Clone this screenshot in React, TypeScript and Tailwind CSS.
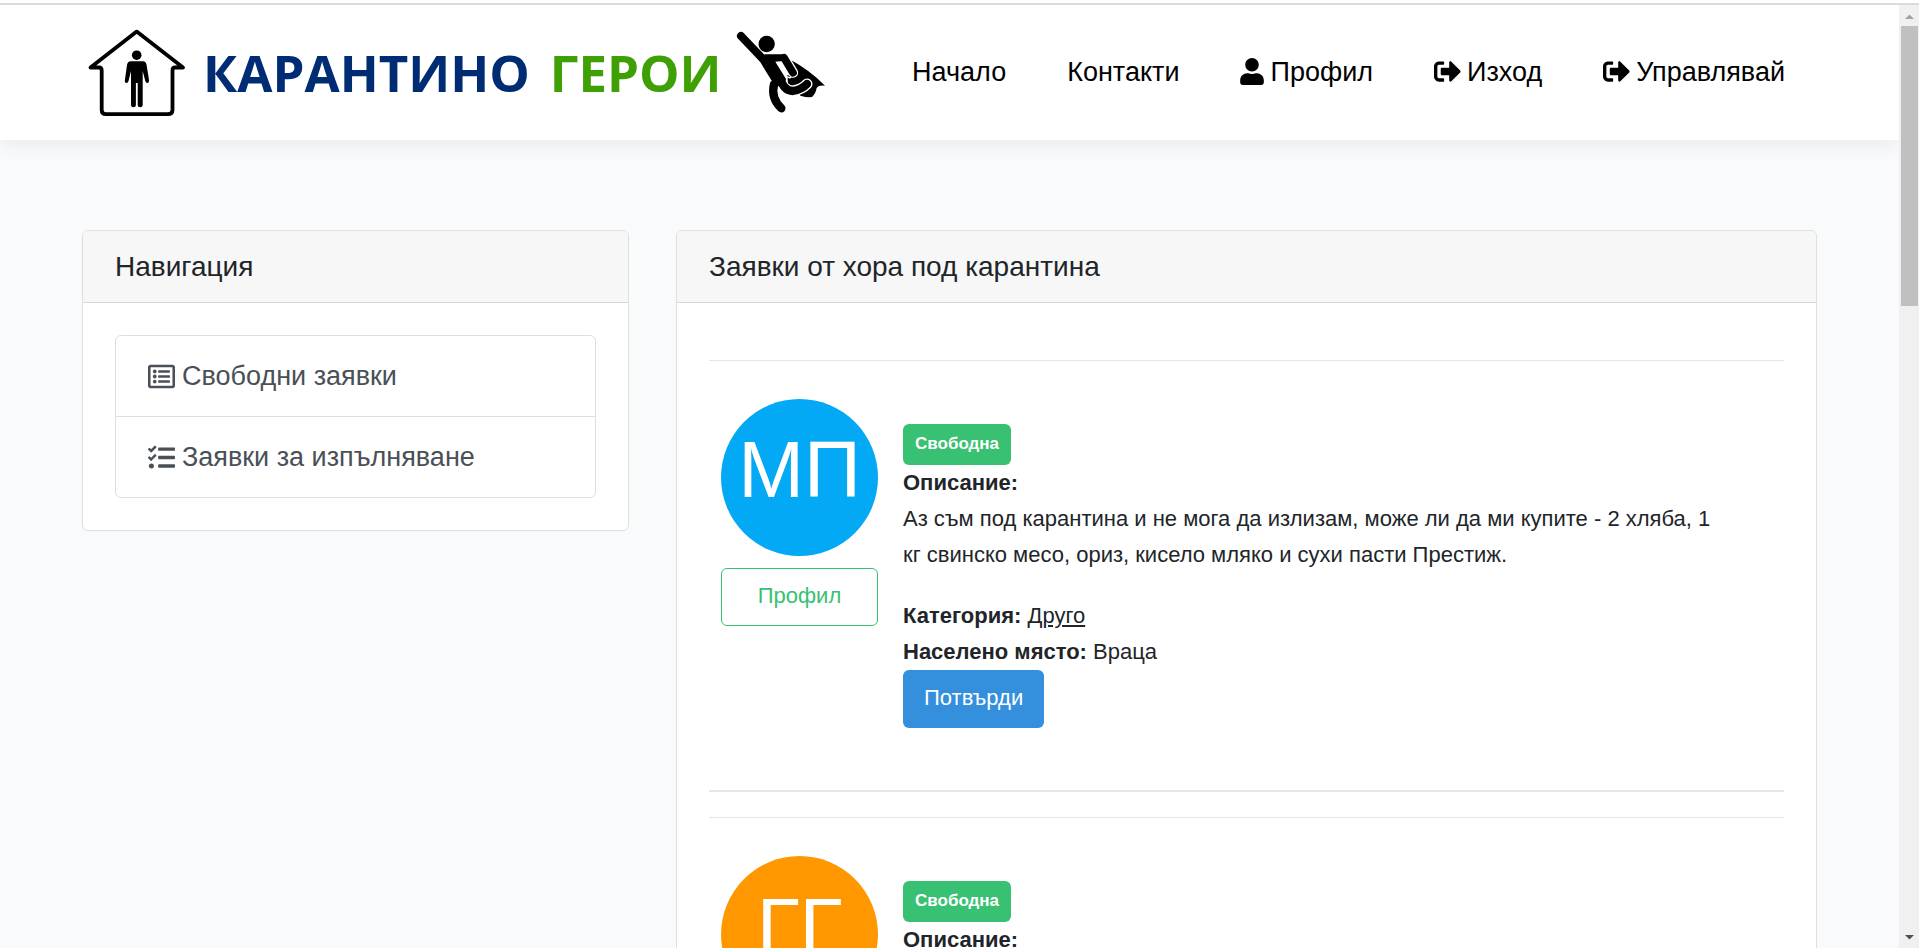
import React from "react";
import { FaUser, FaSignOutAlt, FaRegListAlt, FaTasks } from "react-icons/fa";

type HelpRequest = {
  id: number;
  initials: string;
  avatarClass: string;
  description: string;
  category: string;
  town: string;
};

const requests: HelpRequest[] = [
  {
    id: 1,
    initials: "МП",
    avatarClass: "bg-[#03a9f4]",
    description:
      "Аз съм под карантина и не мога да излизам, може ли да ми купите - 2 хляба, 1 кг свинско месо, ориз, кисело мляко и сухи пасти Престиж.",
    category: "Друго",
    town: "Враца",
  },
  {
    id: 2,
    initials: "ГГ",
    avatarClass: "bg-[#ff9800]",
    description: "",
    category: "Друго",
    town: "Враца",
  },
];

function HouseIcon() {
  return (
    <svg viewBox="0 0 100 90" className="h-[90px] w-[100px] shrink-0" aria-hidden="true">
      <path
        d="M49.7 3.6L3.5 39.5H12Q14.700 39.500 14.700 42.500V82Q14.700 86.200 19 86.200H81Q85.500 86.200 85.500 82V42.500Q85.500 39.500 88 39.500H96Z"
        fill="none"
        stroke="#000"
        strokeWidth="3.800"
        strokeLinejoin="round"
      />
      <circle cx="49.700" cy="27.200" r="4.800" />
      <path d="M43.500 33.200H56Q59 33.200 59.600 37L62 52Q62.200 55 60.300 55Q58.800 55 58.300 53L55.700 43V77Q55.700 79.200 53.200 79.200Q50.700 79.200 50.700 77V55H48.900V77Q48.900 79.200 46.400 79.200Q44 79.200 44 77V43L41.500 53Q41 55 39.500 55Q37.500 55 37.900 52L40 37Q40.600 33.200 43.500 33.200Z" />
    </svg>
  );
}

function HeroIcon() {
  return (
    <svg
      viewBox="0 0 300 285"
      className="h-[95px] w-[100px] shrink-0"
      fill="none"
      strokeLinecap="round"
      strokeLinejoin="round"
      aria-hidden="true"
    >
      <path
        d="M184 106Q238 135 285 182Q266 180 260 189Q257 206 246 216Q232 218 211 212L200 190L174 176L172 150L195 155Z"
        fill="#000"
      />
      <path d="M162 98L189 143" stroke="#fff" strokeWidth="31" />
      <path d="M152 165Q162 198 188 198Q215 194 231 177" stroke="#fff" strokeWidth="33" />
      <path d="M162 98L189 143" stroke="#000" strokeWidth="23" />
      <path d="M150 160Q162 198 188 198Q215 194 231 177" stroke="#000" strokeWidth="25" />
      <path d="M132 178Q122 220 154 250" stroke="#000" strokeWidth="25" />
      <path d="M33 33L98 101" stroke="#000" strokeWidth="24" />
      <path
        d="M84 100L105 88L158 88Q166 90 170 96L160 108L136 110L168 162L162 190L146 184L124 166Z"
        fill="#000"
      />
      <path d="M142 112L167 152Q172 159 182 158" stroke="#fff" strokeWidth="4" />
      <circle cx="110" cy="57" r="24.500" fill="#000" />
    </svg>
  );
}

function Logo() {
  return (
    <a href="#" className="flex items-center" aria-label="Карантино герои">
      <HouseIcon />
      <span className="ml-4 flex gap-5 font-['Open_Sans',sans-serif] text-[51px] leading-none font-bold">
        <span className="text-[#002c73]">КАРАНТИНО</span>
        <span className="text-[#3fa006]">ГЕРОИ</span>
      </span>
      <span className="ml-2">
        <HeroIcon />
      </span>
    </a>
  );
}

function Card({ title, children }: { title: string; children: React.ReactNode }) {
  return (
    <section className="overflow-hidden rounded-md border border-[#dfdfdf] bg-white">
      <h2 className="border-b border-[#d8d8d8] bg-[#f7f7f7] px-8 py-4 text-[28px] leading-[39px]">
        {title}
      </h2>
      <div className="p-8">{children}</div>
    </section>
  );
}

function RequestItem({ request }: { request: HelpRequest }) {
  return (
    <article className="border-b-2 border-[#e6e6e6] pb-[62px]">
      <div className="flex gap-[25px] border-t border-[#e5e5e5] px-3 pt-[38px]">
        <div className="flex w-[157px] shrink-0 flex-col gap-3">
          <div
            className={
              "flex h-[157px] items-center justify-center rounded-full pb-4 text-[79px] leading-none text-white " +
              request.avatarClass
            }
          >
            {request.initials}
          </div>
          <button
            type="button"
            className="h-[58px] rounded-md border border-[#38c172] pb-0.5 text-[#38c172]"
          >
            Профил
          </button>
        </div>
        <div className="pt-[25px] pr-10">
          <span className="flex h-[41px] w-fit items-center rounded-md bg-[#38c172] px-3 pb-0.5 text-[17px] font-bold text-white">
            Свободна
          </span>
          <h3 className="font-bold">Описание:</h3>
          <p className="mb-[25px]">{request.description}</p>
          <p>
            <b>Категория:</b> <u className="underline-offset-2">{request.category}</u>
          </p>
          <p>
            <b>Населено място:</b> {request.town}
          </p>
          <button
            type="button"
            className="h-[58px] rounded-md bg-[#3490dc] px-[21px] pb-0.5 text-white"
          >
            Потвърди
          </button>
        </div>
      </div>
    </article>
  );
}

function ScrollBar() {
  return (
    <div className="flex w-5 shrink-0 flex-col items-center bg-[#f0f0f0]" aria-hidden="true">
      <svg viewBox="0 0 20 21" className="h-[21px] w-5 shrink-0">
        <path d="M6 14L10.500 9.500L15 14Z" fill="#a3a3a3" />
      </svg>
      <div className="h-[280px] w-[17px] bg-[#c0c0c0]" />
      <svg viewBox="0 0 20 21" className="mt-auto h-[21px] w-5 shrink-0">
        <path d="M6 8L10.500 12.500L15 8Z" fill="#505050" />
      </svg>
    </div>
  );
}

export default function App() {
  return (
    <div className="flex h-screen flex-col overflow-hidden bg-[#f8fafc] font-['Liberation_Sans',Arial,sans-serif] text-[22px] leading-9 text-[#212529]">
      <div className="shrink-0 border-b-2 border-[#dadae0] bg-white pt-[3px]" />
      <div className="flex min-h-0 flex-1">
        <div className="min-w-0 flex-1 overflow-hidden">
          <header className="flex h-[135px] items-center justify-between bg-white pr-[114px] pl-[87px] shadow-[0_3px_20px_rgba(0,0,0,0.08)]">
            <Logo />
            <nav className="flex gap-[61px] pb-0.5 text-[27px] text-black">
              <a href="#">Начало</a>
              <a href="#">Контакти</a>
              <a href="#" className="flex items-center gap-1.5">
                <FaUser className="w-6" />
                Профил
              </a>
              <a href="#" className="flex items-center gap-1.5">
                <FaSignOutAlt />
                Изход
              </a>
              <a href="#" className="flex items-center gap-1.5">
                <FaSignOutAlt />
                Управлявай
              </a>
            </nav>
          </header>
          <main className="flex items-start gap-[47px] px-[82px] pt-[90px]">
            <aside className="w-[547px] shrink-0">
              <Card title="Навигация">
                <ul className="divide-y divide-[#dfdfdf] rounded-md border border-[#dfdfdf] text-[27px] leading-10 text-[#495057]">
                  <li>
                    <a href="#" className="flex items-center gap-[7px] px-8 py-5">
                      <FaRegListAlt />
                      Свободни заявки
                    </a>
                  </li>
                  <li>
                    <a href="#" className="flex items-center gap-[7px] px-8 py-5">
                      <FaTasks />
                      Заявки за изпълняване
                    </a>
                  </li>
                </ul>
              </Card>
            </aside>
            <div className="min-w-0 flex-1">
              <Card title="Заявки от хора под карантина">
                <div className="flex flex-col gap-[25px] pt-[25px]">
                  {requests.map((request) => (
                    <RequestItem key={request.id} request={request} />
                  ))}
                </div>
              </Card>
            </div>
          </main>
        </div>
        <ScrollBar />
      </div>
    </div>
  );
}
